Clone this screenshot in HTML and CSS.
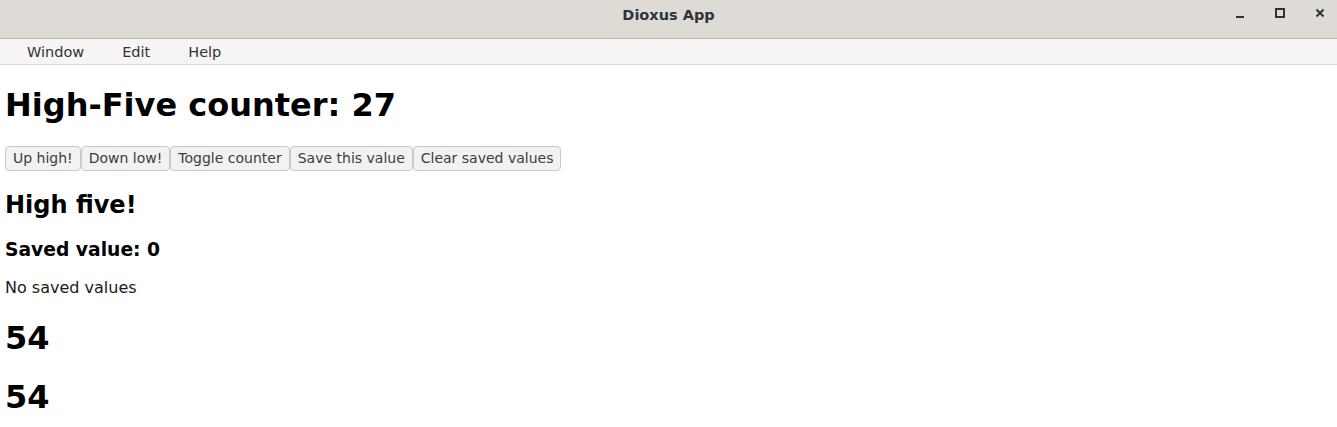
FILE: index.html
```html
<!DOCTYPE html>
<html>
<head>
<meta charset="utf-8">
<link rel="stylesheet" href="styles.css">
</head>
<body>
<div class="titlebar">
  <div class="title">Dioxus App</div>
  <div class="controls">
    <span class="ctl"><svg width="12" height="12" viewBox="0 0 12 12"><rect x="2" y="9" width="8" height="2" fill="#2e3436"/></svg></span>
    <span class="ctl"><svg width="12" height="12" viewBox="0 0 12 12"><rect x="2" y="2" width="8" height="8" fill="none" stroke="#2e3436" stroke-width="2"/></svg></span>
    <span class="ctl"><svg width="12" height="12" viewBox="0 0 12 12"><path d="M2.5 2.5 L9.5 9.5 M9.5 2.5 L2.5 9.5" stroke="#2e3436" stroke-width="2"/></svg></span>
  </div>
</div>
<div class="menubar">
  <span class="menu">Window</span>
  <span class="menu">Edit</span>
  <span class="menu">Help</span>
</div>
<div class="page">
  <h1>High-Five counter: 27</h1>
  <div class="buttons"><button>Up high!</button><button>Down low!</button><button>Toggle counter</button><button>Save this value</button><button>Clear saved values</button></div>
  <h2>High five!</h2>
  <h3>Saved value: 0</h3>
  <p>No saved values</p>
  <h1>54</h1>
  <h1>54</h1>
</div>
</body>
</html>
```
FILE: styles.css
```css
html, body {
  margin: 0;
  padding: 0;
  background: #ffffff;
  font-family: "DejaVu Sans", sans-serif;
  overflow: hidden;
}
.titlebar {
  height: 38px;
  background: #dedbd7;
  border-bottom: 1px solid #bfb8b1;
  position: relative;
  display: flex;
  align-items: center;
  justify-content: center;
}
.title {
  font-weight: bold;
  font-size: 14.5px;
  color: #2e3436;
  margin-top: -9px;
}
.controls {
  position: absolute;
  right: 11px;
  top: 7px;
  display: flex;
  gap: 28px;
}
.ctl {
  width: 12px;
  height: 12px;
  display: block;
}
.ctl svg { display: block; }
.menubar {
  height: 25px;
  background: #f6f5f4;
  border-bottom: 1px solid #dcdad6;
  display: flex;
  align-items: center;
  padding-left: 27px;
  font-size: 14.5px;
  color: #2e3436;
}
.menu { margin-right: 38px; }
.page {
  padding: 0 5px;
  color: #000;
}
.page h1 {
  font-size: 32px;
  margin: 21.44px 0;
}
.page h2 {
  font-size: 24px;
  margin: 19.92px 0;
}
.page h3 {
  font-size: 18.72px;
  margin: 18.72px 0;
}
.page p {
  font-size: 16px;
  margin: 16px 0;
  color: #1a1a1a;
}
.buttons { display: flex; }
button {
  font-family: "DejaVu Sans", sans-serif;
  font-size: 14px;
  color: #3c3c3c;
  background: #f2f2f2;
  border: 1px solid #cacaca;
  border-radius: 4px;
  height: 25px;
  padding: 0 7px;
  margin: 0;
}
```
